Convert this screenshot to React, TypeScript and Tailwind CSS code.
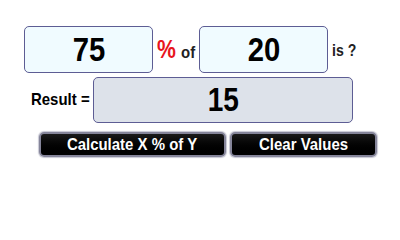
const font = { fontFamily: '"Liberation Sans", Arial, sans-serif' };

const NumberBox = ({ value }: { value: string }) => {
  return (
    <div className="flex h-[47px] w-[129px] items-center justify-center rounded-[5px] border-[1.5px] border-[#5d5d94] bg-[#f0fbff] text-black">
      <span className="inline-block scale-x-[0.86] text-[34px] font-bold">{value}</span>
    </div>
  );
};

const Button = ({ label, width }: { label: string; width: string }) => {
  return (
    <button
      className={`flex h-[25px] ${width} items-center justify-center rounded-[5px] border-2 border-[#85859a] bg-gradient-to-b from-[#1a1a1a] to-black text-white shadow-[0_0_1px_1px_#c8c8d4]`}
    >
      <span className="inline-block scale-x-[0.88] whitespace-nowrap text-[17px] font-bold">{label}</span>
    </button>
  );
};

const App = () => {
  return (
    <div className="h-[200px] w-[400px] bg-white pt-[26px]" style={font}>
      <div className="flex h-[47px] items-center pl-[24px]">
        <NumberBox value="75" />
        <div className="ml-[4px] mr-[3px] flex items-baseline pt-[1px]">
          <span className="inline-block w-[24px] origin-left scale-x-[0.85] text-[25px] font-bold text-[#e8141c]">%</span>
          <span className="inline-block w-[15px] origin-left scale-x-[0.88] text-[17px] font-bold text-[#222]">of</span>
        </div>
        <NumberBox value="20" />
        <span className="ml-[4px] inline-block origin-left scale-x-[0.88] pt-[2px] text-[16px] font-bold text-[#222]">
          is ?
        </span>
      </div>
      <div className="mt-[4px] flex h-[46px] items-center pl-[31px]">
        <span className="inline-block w-[62px] origin-left scale-x-[0.88] whitespace-nowrap text-[17px] font-bold text-black">
          Result =
        </span>
        <div className="flex h-[46px] w-[260px] items-center justify-center rounded-[5px] border-[1.5px] border-[#5d5d94] bg-[#dde2ea] text-black">
          <span className="inline-block scale-x-[0.85] text-[33px] font-bold">15</span>
        </div>
      </div>
      <div className="mt-[9px] flex gap-[4px] pl-[39px]">
        <Button label="Calculate X % of Y" width="w-[187px]" />
        <Button label="Clear Values" width="w-[147px]" />
      </div>
    </div>
  );
};

export default App;
